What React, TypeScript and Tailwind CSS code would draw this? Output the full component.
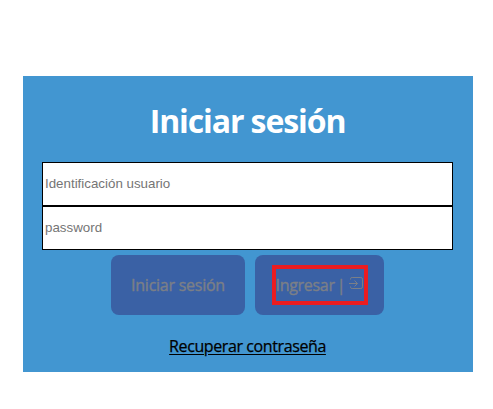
const fieldClass =
  "block h-11 w-full border border-black bg-white px-0.5 pb-0.5 font-['Liberation_Sans',Arial,sans-serif] text-[13.333px] text-black outline-none placeholder:text-[#757575]";

function EnterIcon() {
  return (
    <svg className="mb-[5px] ml-[3px] h-4 w-4 shrink-0" viewBox="0 0 16 16" fill="none" stroke="currentColor" strokeWidth="1">
      <path d="M2.5 4.5V3.7Q2.5 2.5 4.2 2.5H12.8Q14.5 2.5 14.5 4.2V11.8Q14.5 13.5 12.8 13.5H4.2Q2.5 13.5 2.5 12.3V11.5" />
      <path d="M1 8.5H9.5M6.5 5.5L9.5 8.5L6.5 11.5" />
    </svg>
  );
}

export default function App() {
  return (
    <main className="h-[409px] w-[493px] overflow-hidden bg-white pl-[23px] pt-[76px] font-['Open_Sans','Noto_Sans',sans-serif]">
      <form className="flex h-[296px] w-[450px] flex-col items-center bg-[#4296d1] pl-[19px] pr-5">
        <h1 className="mt-[23px] h-[63px] whitespace-nowrap text-[32px] font-bold leading-[44px] tracking-[-1.1px] text-white">
          Iniciar sesión
        </h1>
        <input className={fieldClass} type="text" placeholder="Identificación usuario" />
        <input className={fieldClass} type="password" placeholder="password" />
        <div className="mt-[5px] flex gap-2.5 text-base text-[#7b7f87] [-webkit-text-stroke:0.4px]">
          <button type="button" className="h-[60px] w-[134px] whitespace-nowrap rounded-lg bg-[#3a61a5] tracking-[-0.25px]">
            Iniciar sesión
          </button>
          <button type="button" className="flex h-[60px] w-[129px] items-center justify-center rounded-lg bg-[#3a61a5]">
            <span className="flex h-10 w-24 items-center whitespace-nowrap border-4 border-[#eb1c20] tracking-[-0.3px]">
              Ingresar<span className="ml-[2px]">|</span><EnterIcon />
            </span>
          </button>
        </div>
        <a className="mt-5 whitespace-nowrap text-base leading-[22px] tracking-[-0.4px] text-black underline underline-offset-2 [-webkit-text-stroke:0.25px]" href="#">
          Recuperar contraseña
        </a>
      </form>
    </main>
  );
}
